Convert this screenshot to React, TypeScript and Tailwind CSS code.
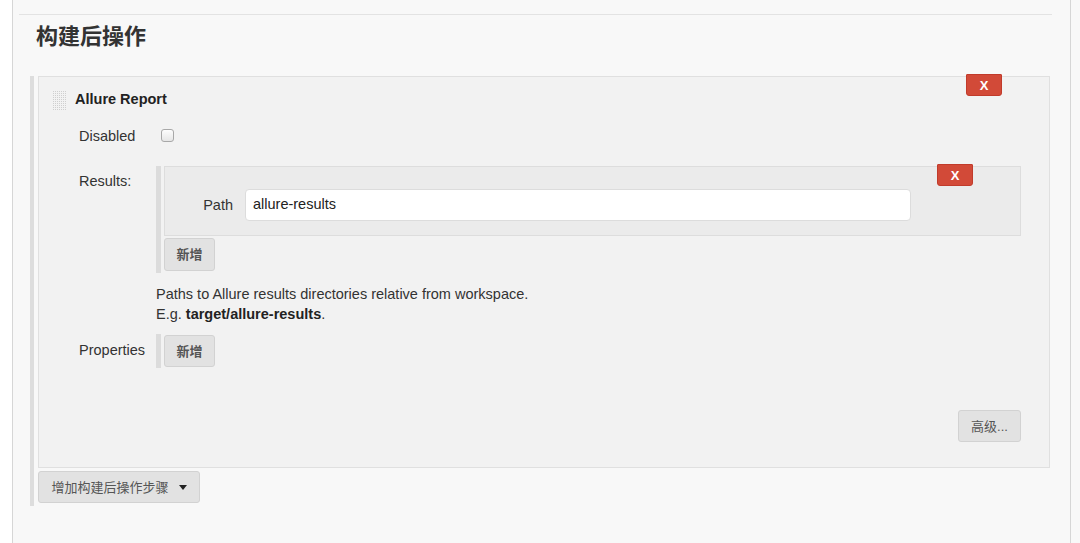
import React from "react";

const font = { fontFamily: '"Liberation Sans", Arial, "Noto Sans CJK SC", sans-serif' };

function XButton({ className }: { className: string }) {
  return (
    <button
      className={`absolute top-[-3px] w-[36px] h-[22px] bg-[#d24a38] border border-[#c13b2b] rounded-b-[3px] rounded-t-[1px] text-white text-[13px] font-bold leading-none flex items-center justify-center ${className}`}
    >
      X
    </button>
  );
}

function GrayButton({ children, className = "" }: { children: React.ReactNode; className?: string }) {
  return (
    <button
      className={`bg-[#e2e2e2] border border-[#d2d2d2] rounded-[3px] text-[13px] font-bold text-[#555] leading-none flex items-center justify-center ${className}`}
    >
      {children}
    </button>
  );
}

function DragHandle() {
  return (
    <svg width="14" height="19" viewBox="0 0 14 19" className="shrink-0">
      <defs>
        <pattern id="dots" width="2" height="2" patternUnits="userSpaceOnUse">
          <rect x="0" y="0" width="1" height="1" fill="#cfcfcf" />
        </pattern>
      </defs>
      <rect x="0" y="0" width="14" height="19" fill="url(#dots)" />
    </svg>
  );
}

export default function App() {
  return (
    <div className="w-[1080px] h-[543px] bg-[#f8f8f8] flex overflow-hidden text-[#333]" style={font}>
      <div className="w-[12px] h-full bg-white shrink-0" />
      <div className="w-[1059px] h-full shrink-0 border-l border-r border-[#d6d6d6] bg-[#f8f8f8] pt-[14px]">
        <div className="ml-[6px] mr-[18px] h-px bg-[#e3e3e3]" />
        <h2 className="ml-[23px] mt-[9px] text-[22px] font-bold leading-[26px] text-[#333]">构建后操作</h2>
        <div className="mt-[26px] ml-[17px] w-[1020px] border-l-[4px] border-[#dddddd] pl-[4px] pb-[3px]">
          {/* Panel */}
          <div className="relative w-[1012px] bg-[#f2f2f2] border border-[#e0e0e0] pt-[11px] pb-[25px]">
            <XButton className="right-[47px]" />
            <div className="flex items-center h-[24px] pl-[14px]">
              <DragHandle />
              <span className="ml-[8px] text-[14.5px] font-bold text-[#222]">Allure Report</span>
            </div>
            {/* Disabled */}
            <div className="mt-[13px] flex items-center h-[24px] pl-[40px]">
              <span className="w-[82px] text-[14.5px] text-[#333]">Disabled</span>
              <span className="w-[13px] h-[13px] rounded-[3px] border border-[#a8a8a8] bg-gradient-to-b from-[#fdfdfd] to-[#e6e6e6] mt-[-4px]" />
            </div>
            {/* Results */}
            <div className="mt-[17px] flex pl-[40px]">
              <span className="w-[77px] pt-[5px] text-[14.5px] leading-[20px] text-[#333]">Results:</span>
              <div className="border-l-[5px] border-[#dcdcdc] pl-[3px] pb-[2px]">
                <div className="relative w-[857px] h-[70px] bg-[#ebebeb] border border-[#dddddd] pt-[22px] flex">
                  <XButton className="right-[47px]" />
                  <span className="w-[68px] text-right text-[14.5px] leading-[32px] text-[#333]">Path</span>
                  <div className="ml-[12px] w-[666px] h-[32px] bg-white border border-[#dcdcdc] rounded-[4px] flex items-center pl-[7px] text-[14.5px] text-[#222]">
                    allure-results
                  </div>
                </div>
                <GrayButton className="mt-[2px] w-[51px] h-[33px]">新增</GrayButton>
              </div>
            </div>
            {/* Help */}
            <div className="mt-[11px] ml-[117px] text-[14.5px] leading-[20px] text-[#333]">
              <div>Paths to Allure results directories relative from workspace.</div>
              <div>
                E.g. <b className="text-[#222]">target/allure-results</b>.
              </div>
            </div>
            {/* Properties */}
            <div className="mt-[10px] flex items-center pl-[40px]">
              <span className="w-[77px] text-[14.5px] text-[#333]">Properties</span>
              <div className="border-l-[5px] border-[#dcdcdc] pl-[3px] py-[1px]">
                <GrayButton className="w-[51px] h-[32px]">新增</GrayButton>
              </div>
            </div>
            {/* Advanced */}
            <div className="mt-[42px] flex justify-end pr-[28px]">
              <GrayButton className="w-[63px] h-[32px] font-normal">高级...</GrayButton>
            </div>
          </div>
          <GrayButton className="mt-[3px] w-[162px] h-[32px] gap-[10px] font-normal">
            <span>增加构建后操作步骤</span>
            <svg width="8" height="5" viewBox="0 0 8 5">
              <path d="M0 0 L8 0 L4 5 Z" fill="#222" />
            </svg>
          </GrayButton>
        </div>
      </div>
    </div>
  );
}
